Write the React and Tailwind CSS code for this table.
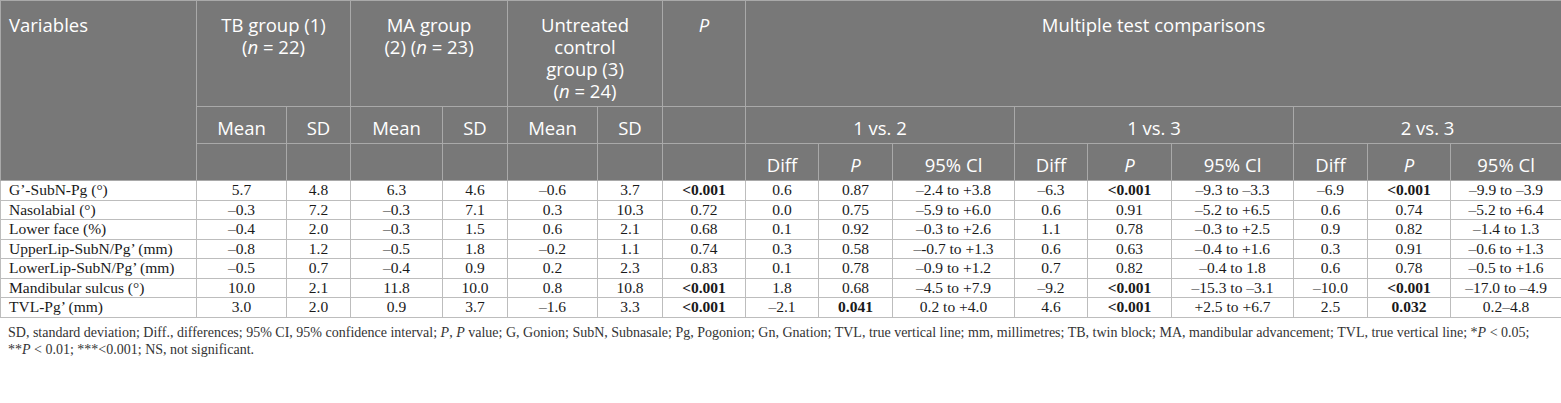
import React from 'react';

const cols = [196, 90, 64, 92, 65, 90, 65, 83, 73, 74, 122, 73, 84, 122, 74, 83, 111];

const rows = [
  ['G’-SubN-Pg (°)', '5.7', '4.8', '6.3', '4.6', '–0.6', '3.7', ['<0.001', true], '0.6', '0.87', '–2.4 to +3.8', '–6.3', ['<0.001', true], '–9.3 to –3.3', '–6.9', ['<0.001', true], '–9.9 to –3.9'],
  ['Nasolabial (°)', '–0.3', '7.2', '–0.3', '7.1', '0.3', '10.3', '0.72', '0.0', '0.75', '–5.9 to +6.0', '0.6', '0.91', '–5.2 to +6.5', '0.6', '0.74', '–5.2 to +6.4'],
  ['Lower face (%)', '–0.4', '2.0', '–0.3', '1.5', '0.6', '2.1', '0.68', '0.1', '0.92', '–0.3 to +2.6', '1.1', '0.78', '–0.3 to +2.5', '0.9', '0.82', '–1.4 to 1.3'],
  ['UpperLip-SubN/Pg’ (mm)', '–0.8', '1.2', '–0.5', '1.8', '–0.2', '1.1', '0.74', '0.3', '0.58', '–-0.7 to +1.3', '0.6', '0.63', '–0.4 to +1.6', '0.3', '0.91', '–0.6 to +1.3'],
  ['LowerLip-SubN/Pg’ (mm)', '–0.5', '0.7', '–0.4', '0.9', '0.2', '2.3', '0.83', '0.1', '0.78', '–0.9 to +1.2', '0.7', '0.82', '–0.4 to 1.8', '0.6', '0.78', '–0.5 to +1.6'],
  ['Mandibular sulcus (°)', '10.0', '2.1', '11.8', '10.0', '0.8', '10.8', ['<0.001', true], '1.8', '0.68', '–4.5 to +7.9', '–9.2', ['<0.001', true], '–15.3 to –3.1', '–10.0', ['<0.001', true], '–17.0 to –4.9'],
  ['TVL-Pg’ (mm)', '3.0', '2.0', '0.9', '3.7', '–1.6', '3.3', ['<0.001', true], '–2.1', ['0.041', true], '0.2 to +4.0', '4.6', ['<0.001', true], '+2.5 to +6.7', '2.5', ['0.032', true], '0.2–4.8'],
];

const th = 'border border-[#a9a9a9] font-normal';
const td = 'border border-[#bdbdbd] text-center align-middle px-1 py-0';

export default function App() {
  return (
    <div className="w-[1561px] h-[403px] bg-white overflow-hidden">
      <table className="table-fixed border-collapse w-[1561px]">
        <colgroup>
          {cols.map((w, i) => (
            <col key={i} style={{ width: w }} />
          ))}
        </colgroup>
        <thead className="bg-[#787878] text-white text-[18.5px] leading-[22px] font-['Open_Sans',sans-serif]">
          <tr className="h-[106px]">
            <th rowSpan={3} className={`${th} text-left align-top pl-2 pt-[13px]`}>Variables</th>
            <th colSpan={2} className={`${th} text-center align-top pt-[13px]`}>
              TB group (1)
              <br />(<i>n</i> = 22)
            </th>
            <th colSpan={2} className={`${th} text-center align-top pt-[13px]`}>
              MA group
              <br />(2) (<i>n</i> = 23)
            </th>
            <th colSpan={2} className={`${th} text-center align-top pt-[13px]`}>
              Untreated
              <br />control
              <br />group (3)
              <br />(<i>n</i> = 24)
            </th>
            <th className={`${th} text-center align-top pt-[13px] italic`}>P</th>
            <th colSpan={9} className={`${th} text-center align-top pt-[13px]`}>Multiple test comparisons</th>
          </tr>
          <tr className="h-[37px]">
            {['Mean', 'SD', 'Mean', 'SD', 'Mean', 'SD', ''].map((t, i) => (
              <th key={i} className={`${th} align-bottom pb-1`}>{t}</th>
            ))}
            <th colSpan={3} className={`${th} align-bottom pb-1`}>1 vs. 2</th>
            <th colSpan={3} className={`${th} align-bottom pb-1`}>1 vs. 3</th>
            <th colSpan={3} className={`${th} align-bottom pb-1`}>2 vs. 3</th>
          </tr>
          <tr className="h-[37px]">
            {['', '', '', '', '', '', ''].map((t, i) => (
              <th key={i} className={th}>{t}</th>
            ))}
            {[0, 1, 2].map((g) => (
              <React.Fragment key={g}>
                <th className={`${th} align-bottom pb-1`}>Diff</th>
                <th className={`${th} align-bottom pb-1 italic`}>P</th>
                <th className={`${th} align-bottom pb-1`}>95% Cl</th>
              </React.Fragment>
            ))}
          </tr>
        </thead>
        <tbody className="text-[15.5px] leading-[18px] text-[#1a1a1a] font-['Liberation_Serif',serif]">
          {rows.map((r, ri) => (
            <tr key={ri} className="h-[19.5px]">
              {r.map((c, ci) => {
                if (ci === 0) {
                  return (
                    <td key={ci} className="border border-[#bdbdbd] text-left pl-2 py-0 whitespace-nowrap">
                      {c}
                    </td>
                  );
                }
                const bold = Array.isArray(c);
                return (
                  <td key={ci} className={`${td} ${bold ? 'font-bold' : ''}`}>
                    {bold ? c[0] : c}
                  </td>
                );
              })}
            </tr>
          ))}
        </tbody>
      </table>
      <div className="pt-[6px] pl-2 text-[14px] leading-[17px] text-[#333] font-['Liberation_Serif',serif]">
        <div className="whitespace-nowrap">
          SD, standard deviation; Diff., differences; 95% CI, 95% confidence interval; <i>P</i>, <i>P</i> value; G, Gonion; SubN, Subnasale; Pg, Pogonion; Gn, Gnation; TVL, true vertical line; mm, millimetres; TB, twin block; MA, mandibular advancement; TVL, true vertical line; *<i>P</i> &lt; 0.05;
        </div>
        <div className="whitespace-nowrap">
          **<i>P</i> &lt; 0.01; ***&lt;0.001; NS, not significant.
        </div>
      </div>
    </div>
  );
}
